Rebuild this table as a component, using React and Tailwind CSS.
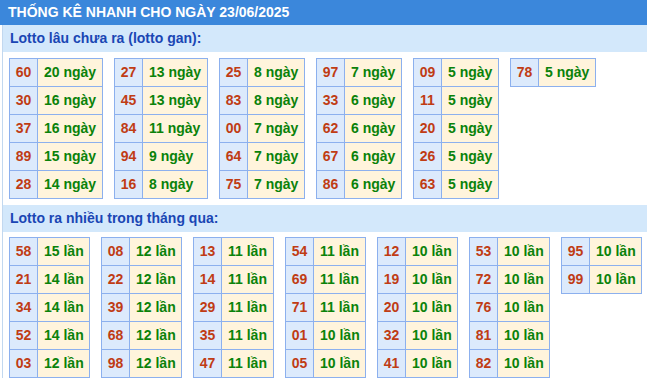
const gan = [
  [['60', '20'], ['30', '16'], ['37', '16'], ['89', '15'], ['28', '14']],
  [['27', '13'], ['45', '13'], ['84', '11'], ['94', '9'], ['16', '8']],
  [['25', '8'], ['83', '8'], ['00', '7'], ['64', '7'], ['75', '7']],
  [['97', '7'], ['33', '6'], ['62', '6'], ['67', '6'], ['86', '6']],
  [['09', '5'], ['11', '5'], ['20', '5'], ['26', '5'], ['63', '5']],
  [['78', '5']],
];

const nhieu = [
  [['58', '15'], ['21', '14'], ['34', '14'], ['52', '14'], ['03', '12']],
  [['08', '12'], ['22', '12'], ['39', '12'], ['68', '12'], ['98', '12']],
  [['13', '11'], ['14', '11'], ['29', '11'], ['35', '11'], ['47', '11']],
  [['54', '11'], ['69', '11'], ['71', '11'], ['01', '10'], ['05', '10']],
  [['12', '10'], ['19', '10'], ['20', '10'], ['32', '10'], ['41', '10']],
  [['53', '10'], ['72', '10'], ['76', '10'], ['81', '10'], ['82', '10']],
  [['95', '10'], ['99', '10']],
];

// valueW is set per table so widths line up with the source page
function LotoTable({ rows, unit, valueW }) {
  return (
    <div className="flex flex-col border-t border-l border-[#8cb0ee]">
      {rows.map(([num, count]) => (
        <div key={num} className="flex h-[28px]">
          <div className="w-[28px] flex items-center justify-center bg-[#dceafc] text-[#c03c14] border-r border-b border-[#8cb0ee]">
            {num}
          </div>
          <div className={`${valueW} flex items-center pl-[6px] bg-[#fff4dc] text-[#0a820a] border-r border-b border-[#8cb0ee] whitespace-nowrap`}>
            {count} {unit}
          </div>
        </div>
      ))}
    </div>
  );
}

function SectionTitle({ children }) {
  return (
    <div className="h-[27px] flex items-center pl-[7px] bg-[#d3e8fb] text-[#1a46b4] text-[14px]">
      {children}
    </div>
  );
}

export default function App() {
  return (
    <div className="w-[647px] h-[380px] bg-white font-['Liberation_Sans',Arial,sans-serif] font-bold overflow-hidden">
      <div className="h-[25px] flex items-center pl-[8px] bg-[#3b87db] text-white text-[14px]">
        THỐNG KÊ NHANH CHO NGÀY 23/06/2025
      </div>
      <div className="ml-[2px] border-l border-[#c2d8ef]">
        <SectionTitle>Lotto lâu chưa ra (lotto gan):</SectionTitle>
        <div className="flex items-start gap-[11px] pl-[6px] pt-[6px] pb-[6px] text-[14px]">
          {gan.map((rows, i) => (
            <LotoTable key={i} rows={rows} unit="ngày" valueW={i < 2 ? 'w-[65px]' : 'w-[57px]'} />
          ))}
        </div>
        <SectionTitle>Lotto ra nhiều trong tháng qua:</SectionTitle>
        <div className="flex items-start gap-[11px] pl-[6px] pt-[5px] text-[14px]">
          {nhieu.map((rows, i) => (
            <LotoTable key={i} rows={rows} unit="lần" valueW="w-[52px]" />
          ))}
        </div>
      </div>
    </div>
  );
}
